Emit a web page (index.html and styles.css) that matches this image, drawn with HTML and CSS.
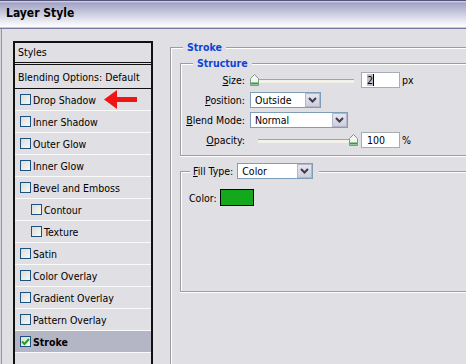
FILE: index.html
```html
<!DOCTYPE html>
<html lang="en">
<head>
    <meta charset="UTF-8">
    <title>Layer Style</title>
    <link rel="stylesheet" href="styles.css">
</head>
<body>
    <div class="window">
        <div class="titlebar">Layer Style</div>

        <div class="content">
            <div class="styles-list">
                <div class="list-head">Styles</div>
                <div class="list-row blending">Blending Options: Default</div>
                <div class="list-row"><span class="check"></span>Drop Shadow</div>
                <div class="list-row"><span class="check"></span>Inner Shadow</div>
                <div class="list-row"><span class="check"></span>Outer Glow</div>
                <div class="list-row"><span class="check"></span>Inner Glow</div>
                <div class="list-row"><span class="check"></span>Bevel and Emboss</div>
                <div class="list-row sub"><span class="check"></span>Contour</div>
                <div class="list-row sub"><span class="check"></span>Texture</div>
                <div class="list-row"><span class="check"></span>Satin</div>
                <div class="list-row"><span class="check"></span>Color Overlay</div>
                <div class="list-row"><span class="check"></span>Gradient Overlay</div>
                <div class="list-row"><span class="check"></span>Pattern Overlay</div>
                <div class="list-row active">
                    <span class="check checked">
                        <svg width="9" height="9" viewBox="0 0 9 9"><path d="M1 4.5l2.5 2.5L8 2" fill="none" stroke="#21a121" stroke-width="2"/></svg>
                    </span>Stroke
                </div>
            </div>

            <fieldset class="group stroke-group">
                <legend class="group-title">Stroke</legend>

                <fieldset class="group structure">
                    <legend class="group-title">Structure</legend>
                    <div class="form-grid">
                        <label><u>S</u>ize:</label>
                        <div class="control">
                            <div class="slider">
                                <div class="track"></div>
                                <svg class="thumb thumb-start" width="9" height="12" viewBox="0 0 9 12"><path d="M0.5 4.5L4.5 0.5L8.5 4.5V11.5H0.5Z" fill="#f4f4f0" stroke="#7f9a84"/><path d="M1 9.5H8" stroke="#2da23a" stroke-width="2"/></svg>
                            </div>
                            <span class="field"><span class="sel">2</span></span>
                            <span class="unit">px</span>
                        </div>

                        <label><u>P</u>osition:</label>
                        <div class="control">
                            <span class="select pos-select">Outside<span class="drop"><svg width="9" height="6" viewBox="0 0 9 6"><path d="M1 1l3.5 3.5L8 1" fill="none" stroke="#3c3c4c" stroke-width="2"/></svg></span></span>
                        </div>

                        <label><u>B</u>lend Mode:</label>
                        <div class="control">
                            <span class="select blend-select">Normal<span class="drop"><svg width="9" height="6" viewBox="0 0 9 6"><path d="M1 1l3.5 3.5L8 1" fill="none" stroke="#3c3c4c" stroke-width="2"/></svg></span></span>
                        </div>

                        <label><u>O</u>pacity:</label>
                        <div class="control">
                            <div class="slider">
                                <div class="track"></div>
                                <svg class="thumb thumb-end" width="9" height="12" viewBox="0 0 9 12"><path d="M0.5 4.5L4.5 0.5L8.5 4.5V11.5H0.5Z" fill="#f4f4f0" stroke="#7f9a84"/><path d="M1 9.5H8" stroke="#2da23a" stroke-width="2"/></svg>
                            </div>
                            <span class="field">100</span>
                            <span class="unit">%</span>
                        </div>
                    </div>
                </fieldset>

                <fieldset class="group fill">
                    <legend class="fill-title">
                        <label><u>F</u>ill Type:</label>
                        <span class="select fill-select">Color<span class="drop"><svg width="9" height="6" viewBox="0 0 9 6"><path d="M1 1l3.5 3.5L8 1" fill="none" stroke="#3c3c4c" stroke-width="2"/></svg></span></span>
                    </legend>
                    <div class="color-row">
                        <label>Color:</label>
                        <span class="swatch"></span>
                    </div>
                </fieldset>
            </fieldset>
        </div>

        <svg class="arrow" width="33" height="19" viewBox="0 0 33 19">
            <path d="M0 9.5L13 0V7H33V12H13V19Z" fill="#f01414"/>
        </svg>
    </div>
</body>
</html>
```

FILE: styles.css
```css
body {
    margin: 0;
    width: 466px;
    height: 364px;
    overflow: hidden;
    background: #e0dfe3;
    font-family: "DejaVu Sans Condensed", "DejaVu Sans", sans-serif;
    font-stretch: condensed;
    font-size: 10.5px;
    color: #000;
}
.window {
    position: relative;
    height: 364px;
    overflow: hidden;
    box-shadow: inset 1px 0 #d4d4dc, inset 2px 0 #9494ac;
}
.titlebar {
    height: 26px;
    padding-left: 6px;
    line-height: 25px;
    font-size: 12px;
    font-weight: bold;
    border-top: 1px solid #55557a;
    border-bottom: 1px solid #c4ccc4;
    box-shadow: 0 1px #7c7ca2;
    background: linear-gradient(#dcdcec 0, #a2a2c6 8%, #c8c8de 45%, #f6f6fa 90%, #fff 100%);
}
.content {
    display: flex;
    align-items: flex-start;
    padding: 12px 0 0 13px;
}

/* styles list */
.styles-list {
    flex: none;
    width: 140px;
    height: 340px;
    box-sizing: border-box;
    margin-top: 1px;
    margin-right: 17px;
    border: 2px solid #111;
    border-bottom: none;
}
.list-head {
    height: 19px;
    line-height: 19px;
    padding-left: 3px;
    border-bottom: 3px double #111;
}
.list-row {
    display: flex;
    align-items: center;
    height: 21px;
    padding-left: 5px;
    border-bottom: 1px solid #fafafa;
}
.list-row.blending {
    height: 23px;
    padding-left: 3px;
    border-bottom-color: #111;
}
.list-row.sub {
    padding-left: 16px;
}
.list-row.active {
    background: #b4b6c5;
    font-weight: bold;
}
.check {
    flex: none;
    display: flex;
    align-items: center;
    justify-content: center;
    width: 11px;
    height: 11px;
    box-sizing: border-box;
    margin-right: 2px;
    border: 1px solid #1c5180;
    background: linear-gradient(135deg, #dcdcd6, #f8f8f6);
}

/* group boxes */
.group {
    margin: 0;
    padding: 0;
    min-width: 0;
    border: 1px solid #9d9da1;
    box-shadow: inset 1px 1px #fff, 0 1px #fff;
}
.group-title {
    margin-left: 3px;
    padding: 0 4px;
    line-height: 14px;
    font-weight: bold;
    color: #0b45d8;
    background: #e0dfe3;
}
.stroke-group {
    flex: none;
    width: 330px;
    height: 380px;
    padding-left: 9px;
}
.structure {
    margin-top: 2px;
    padding-bottom: 5px;
}
.structure .group-title {
    margin-left: 12px;
}
.form-grid {
    display: grid;
    grid-template-columns: 64px auto;
    grid-auto-rows: 20px;
    column-gap: 5px;
    align-items: center;
}
.form-grid label {
    text-align: right;
}
.control {
    display: flex;
    align-items: center;
}

/* slider */
.slider {
    position: relative;
    width: 108px;
    height: 12px;
    margin-right: 3px;
}
.track {
    margin: 5px 4px 0 8px;
    height: 3px;
    border-top: 1px solid #a3a3a3;
    background: #f3f2ea;
}
.thumb {
    position: absolute;
    top: 0;
}
.thumb-start {
    left: 0;
}
.thumb-end {
    left: 99px;
}

/* fields */
.field {
    width: 39px;
    height: 16px;
    box-sizing: border-box;
    padding-left: 5px;
    line-height: 14px;
    border: 1px solid #a5acb2;
    background: #fff;
}
.sel {
    background: #c0c0cc;
    border-right: 1px solid #000;
}
.unit {
    margin-left: 2px;
}
.select {
    display: flex;
    align-items: center;
    justify-content: space-between;
    height: 16px;
    box-sizing: border-box;
    padding-left: 4px;
    border: 1px solid #7f9db9;
    background: #fff;
}
.drop {
    display: flex;
    align-items: center;
    justify-content: center;
    width: 15px;
    height: 14px;
    box-sizing: border-box;
    border: 1px solid #b4b6cc;
    background: linear-gradient(#e6e6ee, #cdcfdc);
}
.pos-select {
    width: 71px;
}
.blend-select {
    width: 98px;
}
.fill-select {
    width: 76px;
    margin-left: 4px;
}

/* fill */
.fill {
    margin-top: 7px;
    padding: 10px 0 85px 8px;
}
.fill-title {
    display: flex;
    align-items: center;
    margin-left: 1px;
    padding: 0 6px 0 3px;
    background: #e0dfe3;
}
.color-row {
    display: flex;
    align-items: center;
    height: 17px;
}
.swatch {
    width: 34px;
    height: 17px;
    box-sizing: border-box;
    margin-left: 3px;
    border: 1px solid #000;
    background: #14a81c;
}

.arrow {
    position: absolute;
    left: 104px;
    top: 90px;
}
```
